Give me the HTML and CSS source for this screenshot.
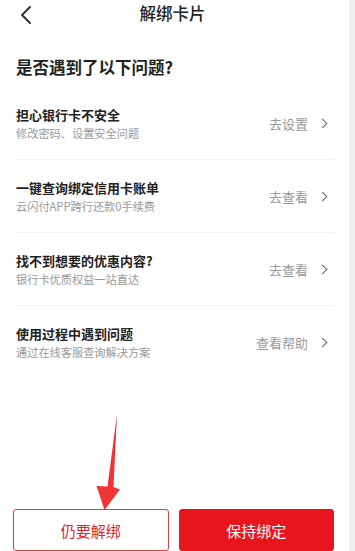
FILE: index.html
```html
<!DOCTYPE html>
<html lang="zh-CN">
<head>
  <meta charset="UTF-8" />
  <title>解绑卡片</title>
  <meta name="viewport" content="width=device-width, initial-scale=1.0" />
  <link rel="stylesheet" href="styles.css">
</head>
<body>
  <div class="page">
    <div class="nav">
      <svg class="nav-back" width="14" height="20" viewBox="0 0 14 20">
        <path d="M11 2 L3 10 L11 18" fill="none" stroke="#333" stroke-width="2" stroke-linecap="round" stroke-linejoin="round"/>
      </svg>
      <div class="nav-title">解绑卡片</div>
    </div>

    <h2 class="question">是否遇到了以下问题?</h2>

    <div class="list">
      <div class="row">
        <div class="row-text">
          <div class="row-title">担心银行卡不安全</div>
          <div class="row-sub">修改密码、设置安全问题</div>
        </div>
        <div class="row-action">去设置<span class="chev"></span></div>
      </div>
      <div class="row">
        <div class="row-text">
          <div class="row-title">一键查询绑定信用卡账单</div>
          <div class="row-sub">云闪付APP跨行还款0手续费</div>
        </div>
        <div class="row-action">去查看<span class="chev"></span></div>
      </div>
      <div class="row">
        <div class="row-text">
          <div class="row-title">找不到想要的优惠内容?</div>
          <div class="row-sub">银行卡优质权益一站直达</div>
        </div>
        <div class="row-action">去查看<span class="chev"></span></div>
      </div>
      <div class="row last">
        <div class="row-text">
          <div class="row-title">使用过程中遇到问题</div>
          <div class="row-sub">通过在线客服查询解决方案</div>
        </div>
        <div class="row-action">查看帮助<span class="chev"></span></div>
      </div>
    </div>

    <div class="buttons">
      <button class="btn btn-ghost">仍要解绑</button>
      <button class="btn btn-solid">保持绑定</button>
    </div>

    <!-- annotation arrow -->
    <svg class="arrow" width="355" height="551" viewBox="0 0 355 551">
      <polygon points="117,414 113.5,487 120,489.5 104.5,510 96.5,486 107.5,486.5" fill="#f03436"/>
    </svg>
  </div>
  <div class="edge"></div>
</body>
</html>
```

FILE: styles.css
```css
* {
  box-sizing: border-box;
}

html, body {
  margin: 0;
  padding: 0;
  height: 100%;
  overflow: hidden;
  font-family: "Noto Sans CJK SC", "Noto Sans", sans-serif;
  background: #efefef;
}

body {
  display: flex;
}

.page {
  width: 349px;
  height: 100%;
  background: #fff;
  position: relative;
  display: flex;
  flex-direction: column;
}

.edge {
  flex: 1;
  background: #efefef;
}

.nav {
  height: 30px;
  display: flex;
  align-items: center;
  justify-content: center;
  position: relative;
}

.nav-back {
  position: absolute;
  left: 19px;
  top: 5px;
}

.nav-title {
  font-size: 16.5px;
  font-weight: 500;
  color: #222;
  margin-left: -4px;
}

.question {
  margin: 29px 0 0 16px;
  font-size: 16.5px;
  line-height: 24px;
  font-weight: 700;
  color: #222;
}

.list {
  margin: 8px 15px 0 14px;
}

.row {
  height: 73px;
  display: flex;
  align-items: center;
  justify-content: space-between;
  padding: 0 6px 0 2px;
  border-bottom: 1px solid #f1f1f1;
}

.row.last {
  border-bottom-color: transparent;
}

.row-text {
  display: flex;
  flex-direction: column;
}

.row-title {
  font-size: 13px;
  line-height: 18px;
  font-weight: 700;
  color: #222;
}

.row-sub {
  font-size: 11.2px;
  line-height: 16px;
  color: #999;
  margin-top: 1px;
}

.row-action {
  display: flex;
  align-items: center;
  font-size: 13px;
  color: #999;
}

.chev {
  width: 7px;
  height: 7px;
  border-top: 1.5px solid #666;
  border-right: 1.5px solid #666;
  transform: rotate(45deg);
  margin-left: 11px;
  margin-right: 2px;
}

.buttons {
  display: flex;
  gap: 10px;
  margin: 130px 15px 0 13px;
}

.btn {
  flex: 1;
  height: 42px;
  border-radius: 3px;
  font-family: inherit;
  font-size: 15px;
  padding: 0;
}

.btn-ghost {
  background: #fff;
  border: 1px solid #e33a40;
  color: #d9262d;
}

.btn-solid {
  background: #e8151d;
  border: 1px solid #e8151d;
  color: #fff;
}

.arrow {
  position: absolute;
  left: 0;
  top: 0;
  pointer-events: none;
}
```
